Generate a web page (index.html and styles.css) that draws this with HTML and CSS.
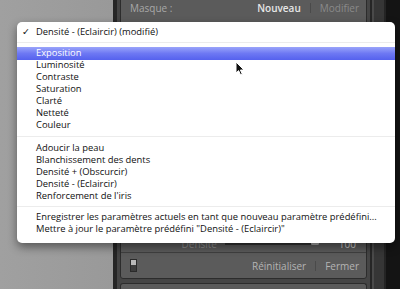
FILE: index.html
```html
<!DOCTYPE html>
<html lang="fr">
<head>
    <meta charset="UTF-8">
    <meta name="viewport" content="width=device-width, initial-scale=1.0">
    <title>Pinceau - paramètres prédéfinis</title>
    <link rel="stylesheet" href="styles.css">
</head>
<body>
    <div class="app">
        <div class="desk"></div>

        <div class="frame">
            <div class="side">
                <div class="panel panel-top">
                    <span class="label">Masque :</span>
                    <span class="actions">
                        <span class="btn-text strong">Nouveau</span>
                        <span class="sep"></span>
                        <span class="btn-text disabled">Modifier</span>
                    </span>
                </div>

                <div class="panel panel-main">
                    <div class="spacer"></div>
                    <div class="slider-row">
                        <span class="slider-label">Densité</span>
                        <span class="track"><span class="thumb"></span></span>
                        <span class="slider-value">100</span>
                    </div>
                    <div class="button-row">
                        <span class="toggle"></span>
                        <span class="actions">
                            <span class="btn-text">Réinitialiser</span>
                            <span class="sep"></span>
                            <span class="btn-text">Fermer</span>
                        </span>
                    </div>
                </div>

                <div class="panel panel-next"></div>
            </div>
            <div class="scroll"></div>
        </div>
    </div>

    <div class="menu">
        <div class="menu-item checked"><span class="check">✓</span>Densité - (Eclaircir) (modifié)</div>
        <div class="menu-sep"></div>
        <div class="menu-item active">Exposition</div>
        <div class="menu-item">Luminosité</div>
        <div class="menu-item">Contraste</div>
        <div class="menu-item">Saturation</div>
        <div class="menu-item">Clarté</div>
        <div class="menu-item">Netteté</div>
        <div class="menu-item">Couleur</div>
        <div class="menu-sep wide"></div>
        <div class="menu-item">Adoucir la peau</div>
        <div class="menu-item">Blanchissement des dents</div>
        <div class="menu-item">Densité + (Obscurcir)</div>
        <div class="menu-item">Densité - (Eclaircir)</div>
        <div class="menu-item">Renforcement de l'iris</div>
        <div class="menu-sep"></div>
        <div class="menu-item">Enregistrer les paramètres actuels en tant que nouveau paramètre prédéfini...</div>
        <div class="menu-item">Mettre à jour le paramètre prédéfini "Densité - (Eclaircir)"</div>
    </div>

    <svg class="cursor" width="10" height="15" viewBox="0 0 10 15">
        <path d="M1 1 L1 12 L3.6 9.6 L5.6 14 L7.3 13.2 L5.4 9 L9 9 Z" fill="#111" stroke="#fff" stroke-width="1"/>
    </svg>
</body>
</html>
```

FILE: styles.css
```css
body {
    margin: 0;
    padding: 0;
    width: 400px;
    height: 289px;
    overflow: hidden;
    background: #9a9a9a;
    font-family: "Open Sans", "DejaVu Sans", sans-serif;
}

.app {
    display: flex;
    height: 289px;
}

.desk {
    width: 113px;
    background: linear-gradient(90deg, #a0a0a0, #999999);
}

.frame {
    flex: 1;
    display: flex;
    background: #141414;
}

.side {
    width: 247px;
    display: flex;
    flex-direction: column;
    background: #454545;
    border-left: 4px solid #262626;
    border-right: 2px solid #262626;
    padding: 0 3px;
}

.panel {
    background: #5b5b5b;
    border: 1px solid #2c2c2c;
    box-sizing: border-box;
    color: #b0b0b0;
    font-size: 10px;
}

.panel-top {
    height: 28px;
    border-top: none;
    border-radius: 0 0 3px 3px;
    display: flex;
    justify-content: space-between;
    align-items: flex-start;
    padding: 1px 7px 0 9px;
}

.panel-main {
    flex: 1;
    margin-top: 4px;
    display: flex;
    flex-direction: column;
    border-radius: 3px;
}

.panel-next {
    height: 6px;
    margin-top: 4px;
    border-bottom: none;
    border-radius: 3px 3px 0 0;
}

.spacer {
    flex: 1;
}

.label {
    color: #a8a8a8;
}

.actions {
    display: flex;
    align-items: center;
}

.btn-text {
    color: #b4b4b4;
}

.btn-text.strong {
    color: #e6e6e6;
    font-weight: 600;
}

.btn-text.disabled {
    color: #8a8a8a;
}

.sep {
    width: 1px;
    height: 10px;
    background: #4a4a4a;
    margin: 0 9px;
}

.slider-row {
    height: 20px;
    display: flex;
    align-items: center;
    padding: 2px 10px 0 0;
    border-bottom: 1px solid #404040;
    box-sizing: border-box;
}

.slider-label {
    width: 96px;
    text-align: right;
    color: #8e8e8e;
}

.track {
    position: relative;
    width: 94px;
    height: 2px;
    background: #333;
    margin-left: 8px;
}

.thumb {
    position: absolute;
    right: 0;
    top: -4px;
    width: 8px;
    height: 6px;
    background: #a8a8a8;
    border-radius: 4px 4px 1px 1px;
}

.slider-value {
    margin-left: auto;
    color: #cfcfcf;
}

.button-row {
    height: 25px;
    display: flex;
    align-items: center;
    justify-content: space-between;
    padding: 0 7px 0 9px;
}

.toggle {
    width: 5px;
    height: 11px;
    border: 1px solid #2a2a2a;
    background: linear-gradient(#b8b8b8 0, #b8b8b8 50%, #3c3c3c 50%, #3c3c3c 100%);
}

.scroll {
    width: 10px;
    background: #363636;
    border-left: 2px solid #4a4a4a;
    border-right: 2px solid #242424;
}

.menu {
    position: absolute;
    left: 17px;
    top: 22px;
    width: 378px;
    height: 221px;
    box-sizing: border-box;
    padding-top: 4px;
    background: #fff;
    border-radius: 5px;
    box-shadow: 0 4px 10px rgba(0, 0, 0, 0.45);
    font-size: 9.4px;
    color: #111;
}

.menu-item {
    position: relative;
    height: 12px;
    line-height: 12px;
    padding-left: 19px;
    white-space: nowrap;
}

.check {
    position: absolute;
    left: 5px;
    top: 0;
}

.menu-item.active {
    height: 13px;
    margin-bottom: -1px;
    color: #fff;
    background: linear-gradient(#9aa4fa, #6d78f3 50%, #5561ee);
}

.menu-sep {
    height: 1px;
    margin: 4px 0;
    background: #ececec;
}

.menu-sep.wide {
    margin: 5px 0;
}

.cursor {
    position: absolute;
    left: 235px;
    top: 61px;
}
```
